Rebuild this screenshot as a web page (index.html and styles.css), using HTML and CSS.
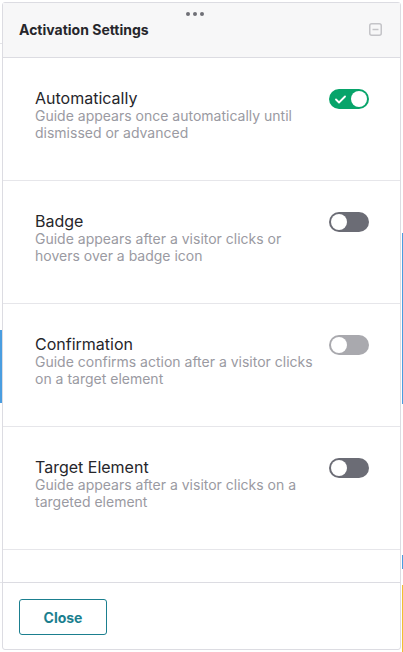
FILE: index.html
```html
<!DOCTYPE html>
<html lang="en">
<head>
  <meta charset="UTF-8">
  <meta name="viewport" content="width=device-width, initial-scale=1.0">
  <title>Activation Settings</title>
  <link rel="stylesheet" href="styles.css">
</head>
<body>
  <div class="panel">
    <header class="panel-header">
      <div class="drag-handle"><span></span><span></span><span></span></div>
      <h1>Activation Settings</h1>
      <button class="minimize" aria-label="Minimize">
        <svg width="13" height="13" viewBox="0 0 13 13"><rect x="0.75" y="0.75" width="11.5" height="11.5" rx="2" fill="none" stroke="#c4c4c8" stroke-width="1.5"/><line x1="3.5" y1="6.5" x2="9.5" y2="6.5" stroke="#c4c4c8" stroke-width="1.5"/></svg>
      </button>
    </header>

    <div class="panel-body">
      <div class="option">
        <div class="option-text">
          <div class="option-title">Automatically</div>
          <div class="option-desc">Guide appears once automatically until dismissed or advanced</div>
        </div>
        <span class="toggle on">
          <svg class="check" width="11" height="9" viewBox="0 0 11 9"><path d="M1 4.5 L4 7.5 L10 1.5" fill="none" stroke="#fff" stroke-width="1.8" stroke-linecap="round" stroke-linejoin="round"/></svg>
          <span class="knob"></span>
        </span>
      </div>

      <div class="option">
        <div class="option-text">
          <div class="option-title">Badge</div>
          <div class="option-desc">Guide appears after a visitor clicks or hovers over a badge icon</div>
        </div>
        <span class="toggle"><span class="knob"></span></span>
      </div>

      <div class="option">
        <div class="option-text">
          <div class="option-title">Confirmation</div>
          <div class="option-desc">Guide confirms action after a visitor clicks on a target element</div>
        </div>
        <span class="toggle disabled"><span class="knob"></span></span>
      </div>

      <div class="option">
        <div class="option-text">
          <div class="option-title">Target Element</div>
          <div class="option-desc">Guide appears after a visitor clicks on a targeted element</div>
        </div>
        <span class="toggle"><span class="knob"></span></span>
      </div>

      <div class="option"></div>
    </div>

    <footer class="panel-footer">
      <button class="btn-close">Close</button>
    </footer>
  </div>
</body>
</html>
```

FILE: styles.css
```css
body {
  margin: 0;
  padding: 2px 2px 2px 2px;
  font-family: Inter, "Noto Sans", sans-serif;
  height: 652px;
  box-sizing: border-box;
  overflow: hidden;
  /* bits of the page behind the panel */
  background:
    linear-gradient(#4a9de0, #4a9de0) 0 330px / 2px 73px no-repeat,
    linear-gradient(#4a9de0, #4a9de0) 402px 233px / 1px 171px no-repeat,
    linear-gradient(#4a9de0, #4a9de0) 402px 555px / 1px 14px no-repeat,
    linear-gradient(#f0c030, #f0c030) 402px 585px / 1px 67px no-repeat,
    linear-gradient(#e4e4e8, #e4e4e8) 0 43px / 2px 1px no-repeat,
    linear-gradient(#e4e4e8, #e4e4e8) 0 582px / 2px 1px no-repeat,
    #ffffff;
}

.panel {
  width: 399px;
  height: 648px;
  box-sizing: border-box;
  border: 1px solid #dcdce2;
  border-radius: 3px;
  background: #fff;
  display: flex;
  flex-direction: column;
}

.panel-header {
  position: relative;
  height: 55px;
  flex: none;
  background: #f7f7f8;
  border-bottom: 1px solid #dcdce2;
  display: flex;
  align-items: center;
  padding: 0 18px 2px 16px;
  box-sizing: border-box;
}

.drag-handle {
  position: absolute;
  top: 9px;
  left: 183px;
  display: flex;
  gap: 3px;
}

.drag-handle span {
  width: 4px;
  height: 4px;
  border-radius: 50%;
  background: #6f7077;
}

.panel-header h1 {
  flex: 1;
  margin: 0;
  font-size: 14px;
  font-weight: 700;
  color: #26262b;
}

.minimize {
  border: none;
  background: none;
  padding: 0;
  display: flex;
}

.panel-body {
  flex: 1;
  overflow: hidden;
}

.option {
  height: 123px;
  box-sizing: border-box;
  border-bottom: 1px solid #e6e6ea;
  padding: 31px 31px 0 32px;
  display: flex;
  align-items: flex-start;
  gap: 14px;
}

.option-text {
  flex: 1;
}

.option-title {
  font-size: 16px;
  line-height: 18px;
  color: #26262b;
}

.option-desc {
  font-size: 14px;
  line-height: 17px;
  color: #9a9aa2;
}

.toggle {
  position: relative;
  flex: none;
  width: 40px;
  height: 20px;
  border-radius: 10px;
  background: #6b6c75;
}

.toggle .knob {
  position: absolute;
  top: 2px;
  left: 2px;
  width: 16px;
  height: 16px;
  border-radius: 50%;
  background: #fff;
}

.toggle.on {
  background: #07a46a;
}

.toggle.on .knob {
  left: 22px;
}

.toggle .check {
  position: absolute;
  left: 6px;
  top: 6px;
}

.toggle.disabled {
  background: #a9a9ae;
}

.panel-footer {
  flex: none;
  height: 67px;
  border-top: 1px solid #dcdce2;
  box-sizing: border-box;
  padding: 16px 16px;
}

.btn-close {
  width: 88px;
  height: 36px;
  border: 1px solid #1b7f8f;
  border-radius: 3px;
  background: #fff;
  color: #1b7f8f;
  font-family: Inter, "Noto Sans", sans-serif;
  font-size: 14px;
  font-weight: 700;
}
```
